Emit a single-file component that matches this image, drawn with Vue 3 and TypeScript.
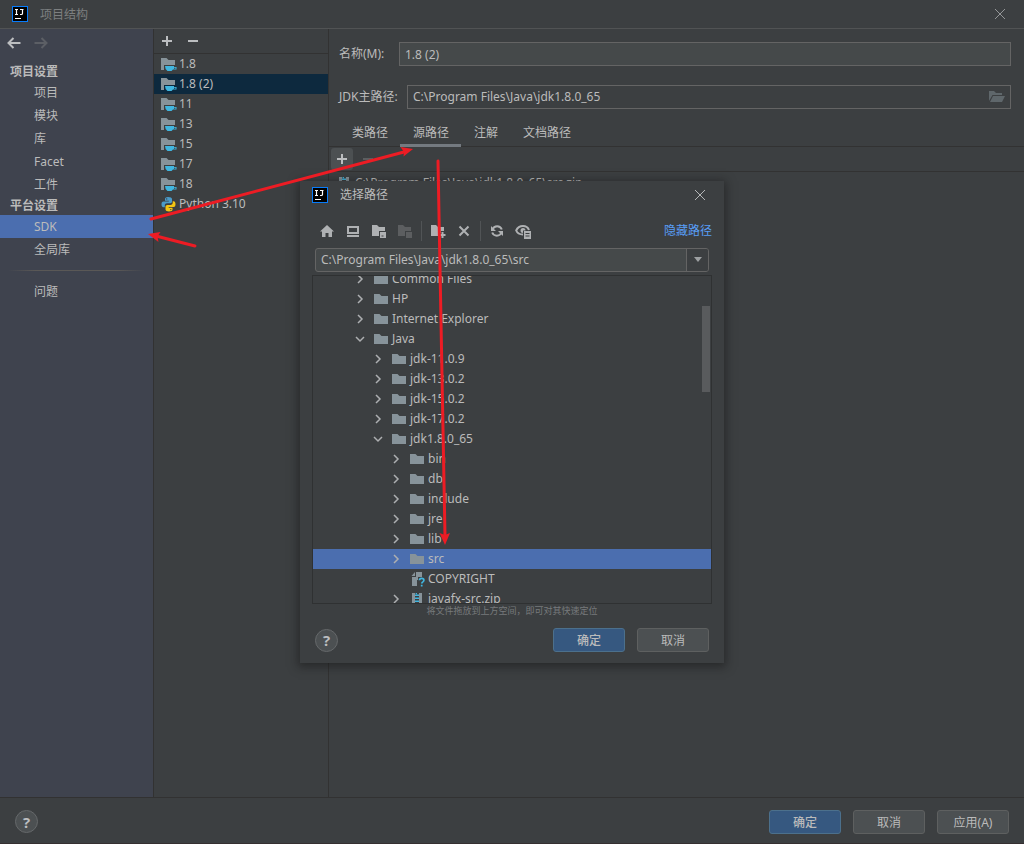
<script setup lang="ts">
import { ref } from 'vue'

interface Sdk {
  name: string
  kind: 'jdk' | 'python'
}

interface TreeNode {
  name: string
  depth: number
  state: 'open' | 'closed' | 'leaf'
  icon: 'folder' | 'file' | 'zip'
}

const projectItems: string[] = ['项目', '模块', '库', 'Facet', '工件']
const platformItems: string[] = ['SDK', '全局库']
const activeSection = ref('SDK')

const sdks: Sdk[] = [
  { name: '1.8', kind: 'jdk' },
  { name: '1.8 (2)', kind: 'jdk' },
  { name: '11', kind: 'jdk' },
  { name: '13', kind: 'jdk' },
  { name: '15', kind: 'jdk' },
  { name: '17', kind: 'jdk' },
  { name: '18', kind: 'jdk' },
  { name: 'Python 3.10', kind: 'python' },
]
const activeSdk = ref('1.8 (2)')

const tabs: string[] = ['类路径', '源路径', '注解', '文档路径']
const activeTab = ref('源路径')

const sdkName = ref('1.8 (2)')
const sdkHome = ref('C:\\Program Files\\Java\\jdk1.8.0_65')
const chosenPath = ref('C:\\Program Files\\Java\\jdk1.8.0_65\\src')
const sourceRoot = 'C:\\Program Files\\Java\\jdk1.8.0_65\\src.zip'

const tree: TreeNode[] = [
  { name: 'Common Files', depth: 0, state: 'closed', icon: 'folder' },
  { name: 'HP', depth: 0, state: 'closed', icon: 'folder' },
  { name: 'Internet Explorer', depth: 0, state: 'closed', icon: 'folder' },
  { name: 'Java', depth: 0, state: 'open', icon: 'folder' },
  { name: 'jdk-11.0.9', depth: 1, state: 'closed', icon: 'folder' },
  { name: 'jdk-13.0.2', depth: 1, state: 'closed', icon: 'folder' },
  { name: 'jdk-15.0.2', depth: 1, state: 'closed', icon: 'folder' },
  { name: 'jdk-17.0.2', depth: 1, state: 'closed', icon: 'folder' },
  { name: 'jdk1.8.0_65', depth: 1, state: 'open', icon: 'folder' },
  { name: 'bin', depth: 2, state: 'closed', icon: 'folder' },
  { name: 'db', depth: 2, state: 'closed', icon: 'folder' },
  { name: 'include', depth: 2, state: 'closed', icon: 'folder' },
  { name: 'jre', depth: 2, state: 'closed', icon: 'folder' },
  { name: 'lib', depth: 2, state: 'closed', icon: 'folder' },
  { name: 'src', depth: 2, state: 'closed', icon: 'folder' },
  { name: 'COPYRIGHT', depth: 2, state: 'leaf', icon: 'file' },
  { name: 'javafx-src.zip', depth: 2, state: 'closed', icon: 'zip' },
]
const activeNode = ref('src')
</script>

<template>
  <div class="window">
    <header class="titlebar">
      <svg class="logo" viewBox="0 0 16 16" aria-hidden="true">
        <rect x="0.5" y="0.5" width="15" height="15" fill="#000" stroke="#087cfa" />
        <path d="M3 3.500h3M4.500 3.500v5M3 8.500h3M8 3.500h3.500M10.500 3.500v4q0 1-1.200 1H8M3 12.500h6" fill="none" stroke="#fff" stroke-width="1.2" />
      </svg>
      <h1 class="title dim">项目结构</h1>
      <button class="close" type="button" aria-label="关闭">
        <svg viewBox="0 0 12 12"><path d="M1 1l10 10M11 1L1 11" /></svg>
      </button>
    </header>

    <div class="body">
      <nav class="sidebar">
        <div class="history">
          <button type="button" aria-label="后退">
            <svg viewBox="0 0 14 12"><path d="M13.500 6H1.500M6.500 1L1.500 6l5 5" /></svg>
          </button>
          <button type="button" aria-label="前进" disabled>
            <svg viewBox="0 0 14 12"><path d="M.5 6h12M7.500 1l5 5-5 5" /></svg>
          </button>
        </div>
        <h2>项目设置</h2>
        <button v-for="item in projectItems" :key="item" type="button" class="section" :class="{ active: item === activeSection }" @click="activeSection = item">{{ item }}</button>
        <h2>平台设置</h2>
        <button v-for="item in platformItems" :key="item" type="button" class="section" :class="{ active: item === activeSection }" @click="activeSection = item">{{ item }}</button>
        <div class="divider"></div>
        <button type="button" class="section" :class="{ active: activeSection === '问题' }" @click="activeSection = '问题'">问题</button>
      </nav>

      <section class="sdk-pane">
        <div class="sdk-tools">
          <button type="button" aria-label="添加 SDK">
            <svg viewBox="0 0 12 12"><path d="M6 1v10M1 6h10" /></svg>
          </button>
          <button type="button" aria-label="移除 SDK">
            <svg viewBox="0 0 12 12"><path d="M1 6h10" /></svg>
          </button>
        </div>
        <ul class="sdk-list">
          <li v-for="sdk in sdks" :key="sdk.name" :class="{ active: sdk.name === activeSdk }" @click="activeSdk = sdk.name">
            <svg v-if="sdk.kind === 'jdk'" viewBox="0 0 16 16">
              <path d="M0 2h5.500l2 2H14v5H3v5H0z" fill="#87939a" />
              <path d="M4 10h9v1h2.500v2.500H12L10.500 15h-4Q4 13.500 4 10zM13 11.800v1h1.500v-1z" fill="#40b6e0" fill-rule="evenodd" />
            </svg>
            <svg v-else viewBox="0 0 16 16">
              <path d="M7 1C4.500 1 4 2 4 3v1.800h3.800v.7H2.500C1 5.500.5 6.800.5 8.500S1.300 11.200 2.500 11.200h1.300V9.500c0-1.400 1-2.200 2.200-2.200h3.300c1 0 1.700-.7 1.700-1.700V3c0-1.300-1.500-2-4-2z" fill="#4a9bc9" />
              <path d="M8 15.500c2.500 0 3.500-.8 3.500-2v-1.800H7.700V11h5c1.300 0 1.800-1.200 1.800-2.800s-.8-2.900-1.800-2.900h-1v1.500c0 1.400-1 2.100-2.200 2.100H6.300c-1 0-1.800.8-1.800 1.800v2.800c0 1.200 1.500 2 3.500 2z" fill="#f2c512" />
              <circle cx="5.700" cy="2.900" r=".7" fill="#3c3f41" />
              <circle cx="9.800" cy="13.600" r=".7" fill="#3c3f41" />
            </svg>
            <span>{{ sdk.name }}</span>
          </li>
        </ul>
      </section>

      <main class="details">
        <div class="field">
          <label for="sdk-name">名称(M):</label>
          <input id="sdk-name" v-model="sdkName" class="name-input" type="text" />
        </div>
        <div class="field home">
          <label for="sdk-home">JDK主路径:</label>
          <div class="browse">
            <input id="sdk-home" v-model="sdkHome" type="text" readonly />
            <button type="button" aria-label="浏览">
              <svg viewBox="0 0 16 14"><path d="M0 1h5l2 2h6v2H3.500L0 11zM4 6h12l-3 6H1z" fill="#5f676b" /></svg>
            </button>
          </div>
        </div>
        <div class="tabs" role="tablist">
          <button v-for="tab in tabs" :key="tab" type="button" role="tab" :aria-selected="tab === activeTab" :class="{ active: tab === activeTab }" @click="activeTab = tab">{{ tab }}</button>
        </div>
        <div class="path-tools">
          <button type="button" class="hovered" aria-label="添加路径">
            <svg viewBox="0 0 12 12"><path d="M6 1v10M1 6h10" /></svg>
          </button>
          <button type="button" aria-label="移除路径" disabled>
            <svg viewBox="0 0 12 12"><path d="M1 6h10" /></svg>
          </button>
        </div>
        <div class="root-row">
          <svg viewBox="0 0 16 16">
            <path d="M3 2h3v13H3zM10 2h3v13h-3z" fill="#87939a" />
            <path d="M6 2h2v1.500h2V5H8v1.500h2V8H8v1.500h2V11H8v1.500h2V14H6v-1.500h2V11H6V9.500h2V8H6V6.500h2V5H6V3.500h2z" fill="#40b6e0" />
          </svg>
          <span>{{ sourceRoot }}</span>
        </div>
      </main>
    </div>

    <footer class="footer">
      <button class="help" type="button" aria-label="帮助">?</button>
      <div class="actions">
        <button class="btn primary" type="button">确定</button>
        <button class="btn" type="button">取消</button>
        <button class="btn" type="button">应用(A)</button>
      </div>
    </footer>

    <div class="overlay">
      <section class="dialog" role="dialog" aria-labelledby="dialog-title">
        <header class="dialog-title">
          <svg class="logo" viewBox="0 0 16 16" aria-hidden="true">
            <rect x="0.5" y="0.5" width="15" height="15" fill="#000" stroke="#087cfa" />
            <path d="M3 3.500h3M4.500 3.500v5M3 8.500h3M8 3.500h3.500M10.500 3.500v4q0 1-1.200 1H8M3 12.500h6" fill="none" stroke="#fff" stroke-width="1.2" />
          </svg>
          <h2 id="dialog-title" class="title">选择路径</h2>
          <button class="close bright" type="button" aria-label="关闭">
            <svg viewBox="0 0 12 12"><path d="M1 1l10 10M11 1L1 11" /></svg>
          </button>
        </header>

        <div class="toolbar">
          <button type="button" aria-label="主目录">
            <svg viewBox="0 0 16 16"><path d="M8 2l7 6.500h-2V14H9.500v-4h-3v4H3V8.500H1z" fill="#afb1b3" /></svg>
          </button>
          <button type="button" aria-label="桌面">
            <svg viewBox="0 0 16 16"><path d="M2 3h12v8H2zM4 5v4h8V5zM2 12h12v2H2z" fill="#afb1b3" fill-rule="evenodd" /></svg>
          </button>
          <button type="button" aria-label="项目目录">
            <svg viewBox="0 0 16 16"><path d="M1 2h5l2 2h6v4H8v5H1zM9 9h6v6H9zM10.500 12.500v1h2v-1z" fill="#afb1b3" fill-rule="evenodd" /></svg>
          </button>
          <button type="button" aria-label="模块目录" disabled>
            <svg viewBox="0 0 16 16"><path d="M1 2h5l2 2h6v4H8v5H1zM9 9h6v6H9z" fill="#5c5e60" /></svg>
          </button>
          <span class="bar"></span>
          <button type="button" aria-label="新建文件夹">
            <svg viewBox="0 0 16 16"><path d="M1 2h5l2 2h6v4h-3v2H8v3H1zM11.500 9h2v2h2v2h-2v2h-2v-2h-2v-2h2z" fill="#afb1b3" /></svg>
          </button>
          <button type="button" aria-label="删除">
            <svg viewBox="0 0 16 16"><path d="M3.500 3.500l9 9M12.500 3.500l-9 9" fill="none" stroke="#afb1b3" stroke-width="2" /></svg>
          </button>
          <span class="bar"></span>
          <button type="button" aria-label="刷新">
            <svg viewBox="0 0 16 16">
              <path d="M3.500 6.500A5 5 0 0 1 12.800 6.500M12.500 9.500A5 5 0 0 1 3.200 9.500" fill="none" stroke="#afb1b3" stroke-width="2" />
              <path d="M2 3v5h5zM14 13V8H9z" fill="#afb1b3" />
            </svg>
          </button>
          <button type="button" aria-label="显示隐藏文件">
            <svg viewBox="0 0 16 16">
              <path d="M8 11.500C4.500 11.500 2 9.500 1.200 7.500 2.500 4.500 5 3 8 3s5 1.500 6 4" fill="none" stroke="#afb1b3" stroke-width="2" />
              <path d="M8 5a2.500 2.500 0 0 1 2.500 2.500H8V10a2.500 2.500 0 0 1 0-5zM9 8h7v8H9zM10.500 10v1h4v-1zM10.500 12.500v1h4v-1z" fill="#afb1b3" fill-rule="evenodd" />
            </svg>
          </button>
          <a href="#" class="hide-path" @click.prevent>隐藏路径</a>
        </div>

        <div class="combo">
          <input v-model="chosenPath" type="text" aria-label="路径" />
          <button type="button" aria-label="历史记录">
            <svg viewBox="0 0 10 6"><path d="M1 0h8L5 5z" fill="#9da0a2" /></svg>
          </button>
        </div>

        <div class="tree-box">
          <ul class="tree" role="tree">
            <li v-for="node in tree" :key="node.name" role="treeitem" :class="['depth-' + node.depth, { active: node.name === activeNode }]" @click="activeNode = node.name">
              <svg class="chevron" viewBox="0 0 12 12">
                <path v-if="node.state === 'closed'" d="M4 2l4 4-4 4" />
                <path v-else-if="node.state === 'open'" d="M2 4l4 4 4-4" />
              </svg>
              <svg v-if="node.icon === 'folder'" class="node-icon" viewBox="0 0 16 16">
                <path d="M1 3h5.500l2 2H15v8H1z" fill="#87939a" />
              </svg>
              <svg v-else-if="node.icon === 'file'" class="node-icon" viewBox="0 0 16 16">
                <path d="M7 1h6v5H9v3H8v6H3V6h4z" fill="#87939a" />
                <path d="M6 1v4H2.500z" fill="#87939a" />
                <path d="M10.500 9.300q0-2 2.200-2t2.200 1.900q0 1-1.100 1.700-1 .6-1 1.600M12.700 13.800v1.700" fill="none" stroke="#40b6e0" stroke-width="1.700" />
              </svg>
              <svg v-else class="node-icon" viewBox="0 0 16 16">
                <path d="M3 2h3v13H3zM10 2h3v13h-3z" fill="#87939a" />
                <path d="M6 2h2v1.500h2V5H8v1.500h2V8H8v1.500h2V11H8v1.500h2V14H6v-1.500h2V11H6V9.500h2V8H6V6.500h2V5H6V3.500h2z" fill="#40b6e0" />
              </svg>
              <span>{{ node.name }}</span>
            </li>
          </ul>
          <div class="thumb"></div>
        </div>
        <p class="hint">将文件拖放到上方空间，即可对其快速定位</p>

        <div class="dialog-footer">
          <button class="help" type="button" aria-label="帮助">?</button>
          <div class="actions">
            <button class="btn primary" type="button">确定</button>
            <button class="btn" type="button">取消</button>
          </div>
        </div>
      </section>
    </div>

    <svg class="arrows" viewBox="0 0 1024 844" aria-hidden="true">
      <g stroke="#ed1c24" stroke-width="3" stroke-linecap="round">
        <path d="M151 219L404 152" />
        <path d="M195 246L158 236.500" />
        <path d="M438 161L445 536" />
      </g>
      <g fill="#ed1c24">
        <path d="M413 149L403.500 156.500 404 152 400.500 147z" />
        <path d="M148 234L160.500 232 157.500 236.500 158.500 242z" />
        <path d="M445 545L439.500 533 445 535 450 533z" />
      </g>
    </svg>
  </div>
</template>

<style>
body {
  margin: 0;
  background: #3c3f41;
}
</style>

<style scoped>
.window {
  position: relative;
  display: flex;
  flex-direction: column;
  box-sizing: border-box;
  min-height: 100vh;
  border-bottom: 1px solid #352f30;
  background: #3c3f41;
  color: #bbbbbb;
  font: 12px/20px "Noto Sans", "Noto Sans CJK SC", sans-serif;
}
.window * {
  box-sizing: border-box;
}
button,
input {
  margin: 0;
  padding: 0;
  border: 0;
  border-radius: 0;
  outline: 0;
  background: none;
  color: inherit;
  font: inherit;
}
h1,
h2,
p,
ul {
  margin: 0;
  padding: 0;
  font-size: 12px;
  list-style: none;
}
svg {
  display: block;
  flex: none;
}

.titlebar,
.dialog-title {
  display: flex;
  align-items: center;
  height: 28px;
  padding: 0 18px 0 12px;
}
.titlebar {
  height: 29px;
  border-bottom: 1px solid #515354;
}
.logo {
  width: 16px;
  height: 16px;
}
.title {
  flex: 1;
  margin-left: 12px;
  font-weight: 400;
  line-height: 22px;
}
.dim {
  padding-top: 2px;
  line-height: 20px;
  color: #7d7f80;
}
.close svg {
  width: 12px;
  height: 12px;
  fill: none;
  stroke: #949698;
}
.bright svg {
  stroke: #b5b7b8;
}

.body {
  display: flex;
  flex: 1;
}
.sidebar {
  display: flex;
  flex-direction: column;
  width: 154px;
  border-right: 1px solid #323232;
  background: #3f434e;
}
.history {
  display: flex;
  gap: 13px;
  align-items: center;
  height: 28px;
  margin-bottom: 5px;
  padding-left: 7px;
}
.history svg {
  width: 14px;
  height: 12px;
  fill: none;
  stroke: #bcbec0;
  stroke-width: 2;
}
.history button:disabled svg {
  stroke: #5c5f65;
}
.sidebar h2 {
  height: 19px;
  padding-left: 10px;
  line-height: 19px;
}
.section {
  height: 23px;
  padding-left: 34px;
  line-height: 23px;
  text-align: left;
}
.section.active {
  background: #4b6eaf;
}
.divider {
  height: 1px;
  margin: 9px 8px;
  background: linear-gradient(90deg, transparent, #5a5856 20%, #5a5856 80%, transparent);
}

.sdk-pane {
  width: 175px;
  border-right: 1px solid #323232;
}
.sdk-tools {
  display: flex;
  gap: 14px;
  align-items: center;
  height: 25px;
  padding-left: 7px;
  border-bottom: 1px solid #323232;
}
.sdk-tools svg,
.path-tools svg {
  width: 12px;
  height: 12px;
  fill: none;
  stroke: #bcbec0;
  stroke-width: 2;
}
.sdk-list li {
  display: flex;
  gap: 2px;
  align-items: center;
  height: 20px;
  padding-left: 7px;
}
.sdk-list li.active {
  background: #0d293e;
}
.sdk-list svg {
  width: 16px;
  height: 16px;
}

.details {
  display: flex;
  flex: 1;
  flex-direction: column;
  min-width: 0;
}
.field {
  display: flex;
  align-items: center;
  margin: 13px 13px 0 10px;
}
.field label {
  width: 60px;
}
.field.home {
  margin-top: 19px;
}
.field.home label {
  width: 68px;
}
.name-input,
.browse {
  flex: 1;
  height: 24px;
  border: 1px solid #646464;
}
.name-input {
  padding: 0 5px;
  background: #45494a;
}
.browse {
  display: flex;
  align-items: center;
  padding: 0 5px;
}
.browse input {
  flex: 1;
  height: 20px;
}
.browse svg {
  width: 16px;
  height: 14px;
}
.tabs {
  display: flex;
  height: 26px;
  margin-top: 12px;
  padding-left: 10px;
  border-bottom: 1px solid #323232;
}
.tabs button {
  height: 26px;
  padding: 0 12px 3px 13px;
  line-height: 20px;
}
.tabs button.active {
  padding-bottom: 0;
  border-bottom: 3px solid #747a80;
}
.path-tools {
  display: flex;
  gap: 4px;
  align-items: center;
  height: 25px;
  padding-left: 2px;
  border-bottom: 1px solid #323232;
}
.path-tools button {
  display: grid;
  place-items: center;
  width: 22px;
  height: 22px;
  border-radius: 3px;
}
.path-tools .hovered {
  background: #4c5052;
}
.path-tools button:disabled svg {
  stroke: #5c5e60;
}
.root-row {
  display: flex;
  align-items: center;
  height: 22px;
  padding-left: 7px;
  gap: 3px;
}
.root-row svg {
  width: 16px;
  height: 16px;
}

.footer,
.dialog-footer,
.actions {
  display: flex;
  align-items: center;
}
.footer {
  justify-content: space-between;
  height: 46px;
  padding: 2px 15px 0;
  border-top: 1px solid #323232;
}
.actions {
  gap: 12px;
}
.help {
  width: 23px;
  height: 23px;
  border: 1px solid #65686a;
  border-radius: 50%;
  background: #4c5052;
  color: #bcbec0;
  font: 700 15px/20px "Open Sans", sans-serif;
}
.btn {
  width: 72px;
  height: 24px;
  padding-top: 2px;
  border: 1px solid #5e6060;
  border-radius: 3px;
  background: #4c5052;
  line-height: 20px;
}
.btn.primary {
  border-color: #4c708c;
  background: #365880;
  font-weight: 500;
}

.overlay {
  position: absolute;
  inset: 0 0 -1px;
  display: grid;
  place-items: center;
}
.dialog {
  width: 424px;
  padding-bottom: 11px;
  background: #3c3f41;
  box-shadow: 0 2px 9px 2px rgba(20, 20, 20, 0.5);
}
.toolbar {
  display: flex;
  gap: 10px;
  align-items: center;
  height: 30px;
  margin: 7px 12px 2px 19px;
}
.toolbar svg {
  width: 16px;
  height: 16px;
}
.bar {
  width: 1px;
  height: 20px;
  margin: 0 -2px;
  background: #515456;
}
.hide-path {
  margin-left: auto;
  color: #589df6;
  line-height: 22px;
  text-decoration: none;
}
.combo {
  display: flex;
  height: 24px;
  margin: 0 15px 3px;
  border: 1px solid #646464;
  border-radius: 3px;
  background: #45494a;
}
.combo input {
  flex: 1;
  min-width: 0;
  padding: 0 5px;
}
.combo button {
  display: grid;
  place-items: center;
  width: 22px;
  border-left: 1px solid #646464;
  border-radius: 0 2px 2px 0;
  background: #3c3f41;
}
.combo svg {
  width: 10px;
  height: 6px;
}
.tree-box {
  position: relative;
  height: 329px;
  margin: 0 12px;
  overflow: hidden;
  border: 1px solid #2f3132;
}
.tree {
  margin-top: -7px;
}
.tree li {
  display: flex;
  align-items: center;
  height: 20px;
}
.tree li.active {
  background: #4b6eaf;
}
.depth-0 {
  padding-left: 41px;
}
.depth-1 {
  padding-left: 59px;
}
.depth-2 {
  padding-left: 77px;
}
.chevron {
  width: 12px;
  height: 12px;
  margin-right: 7px;
  fill: none;
  stroke: #adafb1;
  stroke-width: 1.5;
}
.node-icon {
  width: 16px;
  height: 16px;
  margin-right: 3px;
}
.thumb {
  position: absolute;
  top: 30px;
  right: 1px;
  width: 8px;
  height: 86px;
  background: #595b5d;
}
.hint {
  color: #777a7c;
  font-size: 9px;
  line-height: 14px;
  text-align: center;
}
.dialog-footer {
  justify-content: space-between;
  margin: 10px 15px 0;
}

.arrows {
  position: absolute;
  inset: 0 0 -1px;
  width: 100%;
  height: calc(100% + 1px);
  pointer-events: none;
}
</style>
